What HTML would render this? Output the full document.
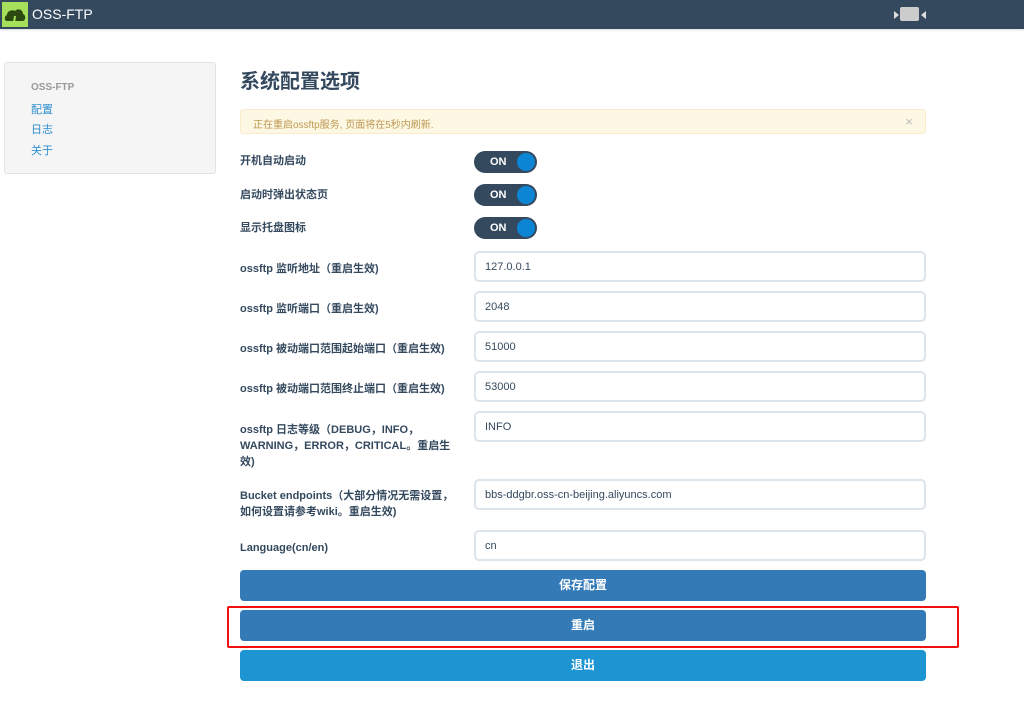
<!DOCTYPE html>
<html><head><meta charset="utf-8"><style>
*{margin:0;padding:0;box-sizing:border-box}
body{width:1024px;height:705px;background:#fff;font-family:"Liberation Sans","Noto Sans CJK SC",sans-serif;position:relative;overflow:hidden;color:#34495e}
.a{position:absolute}
.nav{left:0;top:0;width:1024px;height:29px;background:#34495e;box-shadow:0 1px 2px rgba(0,0,0,.15)}
.side{left:4px;top:62px;width:212px;height:112px;background:#f5f5f5;border:1px solid #e3e3e3;border-radius:3px}
.si{left:31px;font-size:11px;color:#2f8fd0}
.lab{left:240px;font-size:11px;font-weight:bold;line-height:16px;color:#34495e;width:215px}
.tg{left:474px;width:63px;height:22px;border-radius:11px;background:#34495e}
.tg span{position:absolute;left:16px;top:5px;font-size:11px;font-weight:bold;color:#fff}
.tg i{position:absolute;left:43px;top:2px;width:18px;height:18px;border-radius:50%;background:#0b85d4}
.in{left:474px;width:452px;height:31px;border:2px solid #dce4ec;border-radius:5px;font-size:11px;padding:8px 0 0 9px;color:#34495e}
.bt{left:240px;width:686px;height:31px;border-radius:4px;background:#337ab7;color:#fff;font-size:12px;font-weight:bold;text-align:center;line-height:31px}
</style></head><body>
<div class="a nav">
 <div class="a" style="left:2px;top:2px;width:26px;height:25px;background:#a6e05a"></div>
 <svg class="a" style="left:3px;top:4px" width="24" height="22" viewBox="0 0 24 22"><path d="M4 17c-3 0-3-5 0-6 0-4 5-6 8-4 2-3 8-2 8 3 3 1 3 6 0 7z" fill="#2c4a10"/><path d="M11 19l1-7" stroke="#a6e05a" stroke-width="2"/></svg>
 <div class="a" style="left:32px;top:6px;font-size:14px;color:#fff">OSS-FTP</div>
 <div class="a" style="left:900px;top:7px;width:19px;height:14px;background:#ccc;border-radius:2px"></div>
 <div class="a" style="left:894px;top:11px;width:0;height:0;border-top:4px solid transparent;border-bottom:4px solid transparent;border-left:5px solid #ddd"></div>
 <div class="a" style="left:921px;top:11px;width:0;height:0;border-top:4px solid transparent;border-bottom:4px solid transparent;border-right:5px solid #ddd"></div>
</div>
<div class="a side"></div>
<div class="a si" style="top:82px;color:#999;font-size:10px;font-weight:bold">OSS-FTP</div>
<div class="a si" style="top:101px">配置</div>
<div class="a si" style="top:121px">日志</div>
<div class="a si" style="top:142px">关于</div>
<div class="a" style="left:240px;top:65px;font-size:20px;font-weight:bold">系统配置选项</div>
<div class="a" style="left:240px;top:109px;width:686px;height:25px;background:#fcf8e3;border:1px solid #faebcc;border-radius:3px;font-size:10px;color:#c09853;padding:6px 0 0 12px">正在重启ossftp服务, 页面将在5秒内刷新.<span style="position:absolute;right:12px;top:4px;font-size:13px;color:#bbb">×</span></div>
<div class="a lab" style="top:153px">开机自动启动</div>
<div class="a lab" style="top:187px">启动时弹出状态页</div>
<div class="a lab" style="top:220px">显示托盘图标</div>
<div class="a tg" style="top:151px"><span>ON</span><i></i></div>
<div class="a tg" style="top:184px"><span>ON</span><i></i></div>
<div class="a tg" style="top:217px"><span>ON</span><i></i></div>
<div class="a lab" style="top:261px">ossftp 监听地址（重启生效)</div>
<div class="a lab" style="top:301px">ossftp 监听端口（重启生效)</div>
<div class="a lab" style="top:341px">ossftp 被动端口范围起始端口（重启生效)</div>
<div class="a lab" style="top:381px">ossftp 被动端口范围终止端口（重启生效)</div>
<div class="a lab" style="top:422px">ossftp 日志等级（DEBUG，INFO，WARNING，ERROR，CRITICAL。重启生效)</div>
<div class="a lab" style="top:488px">Bucket endpoints（大部分情况无需设置，如何设置请参考wiki。重启生效)</div>
<div class="a lab" style="top:540px">Language(cn/en)</div>
<div class="a in" style="top:251px">127.0.0.1</div>
<div class="a in" style="top:291px">2048</div>
<div class="a in" style="top:331px">51000</div>
<div class="a in" style="top:371px">53000</div>
<div class="a in" style="top:411px">INFO</div>
<div class="a in" style="top:479px">bbs-ddgbr.oss-cn-beijing.aliyuncs.com</div>
<div class="a in" style="top:530px">cn</div>
<div class="a bt" style="top:570px">保存配置</div>
<div class="a bt" style="top:610px">重启</div>
<div class="a bt" style="top:650px;background:#1e95d3">退出</div>
<div class="a" style="left:227px;top:606px;width:732px;height:42px;border:2px solid #f01010;border-radius:2px"></div>
</body></html>
